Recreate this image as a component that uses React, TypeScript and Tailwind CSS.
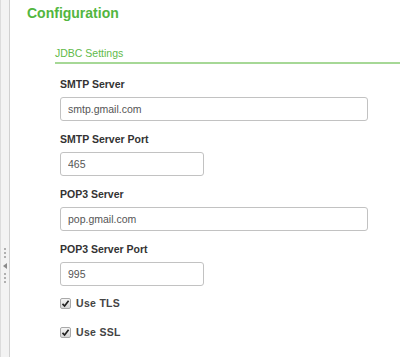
import React from "react";

function Field({ label, value, wide }: { label: string; value: string; wide: boolean }) {
  return (
    <div className="flex flex-col">
      <div className="text-[10.5px] leading-[13px] font-bold text-[#333]">{label}</div>
      <input
        readOnly
        defaultValue={value}
        className={`mt-[6px] h-[24px] ${wide ? "w-[308px]" : "w-[144px]"} border border-[#c2c2c2] rounded-[3px] pl-[7px] text-[10.5px] text-[#555] bg-white outline-none font-['Liberation_Sans',Arial,sans-serif]`}
      />
    </div>
  );
}

function Check({ label }: { label: string }) {
  return (
    <div className="flex items-center h-[13px]">
      <span className="w-[11px] h-[11px] rounded-[2px] border border-[#a9a9a9] bg-gradient-to-b from-[#f5f5f5] to-[#d6d6d6] flex items-center justify-center">
        <svg width="9" height="9" viewBox="0 0 9 9">
          <path d="M1.5 4.8 L3.6 7 L7.6 1.8" fill="none" stroke="#222" strokeWidth="1.7" />
        </svg>
      </span>
      <span className="ml-[5px] text-[10.5px] leading-[13px] font-bold text-[#444] tracking-[0.3px]">{label}</span>
    </div>
  );
}

function Dots() {
  return (
    <div className="flex flex-col gap-[2px]">
      <span className="w-[2px] h-[2px] bg-[#b0b0b0]" />
      <span className="w-[2px] h-[2px] bg-[#b0b0b0]" />
      <span className="w-[2px] h-[2px] bg-[#b0b0b0]" />
    </div>
  );
}

export default function App() {
  return (
    <div className="w-[400px] h-[357px] flex bg-white overflow-hidden font-['Liberation_Sans',Arial,sans-serif]">
      <div className="w-[10px] shrink-0 h-full flex flex-col items-center bg-[#f3f3f3] border-l border-l-[#dcdcdc] border-r border-r-[#d0d0d0]">
        <div className="mt-[248px]">
          <Dots />
        </div>
        <div className="mt-[5px] w-0 h-0 border-y-[3px] border-y-transparent border-r-[4px] border-r-[#8a8a8a]" />
        <div className="mt-[4px]">
          <Dots />
        </div>
      </div>
      <div className="flex-1 pl-[17px] pt-[5px]">
        <div className="text-[14px] leading-[16px] font-bold text-[#52b640]">Configuration</div>
        <div className="ml-[28px] mt-[26px]">
          <div className="text-[10.5px] leading-[13px] text-[#5fba4a] pb-[2px] border-b-2 border-[#a6d896]">
            JDBC Settings
          </div>
          <div className="pl-[5px] pt-[14px] flex flex-col gap-[12px]">
            <Field label="SMTP Server" value="smtp.gmail.com" wide />
            <Field label="SMTP Server Port" value="465" wide={false} />
            <Field label="POP3 Server" value="pop.gmail.com" wide />
            <Field label="POP3 Server Port" value="995" wide={false} />
          </div>
          <div className="pl-[5px] mt-[11px] flex flex-col gap-[16px]">
            <Check label="Use TLS" />
            <Check label="Use SSL" />
          </div>
        </div>
      </div>
    </div>
  );
}
